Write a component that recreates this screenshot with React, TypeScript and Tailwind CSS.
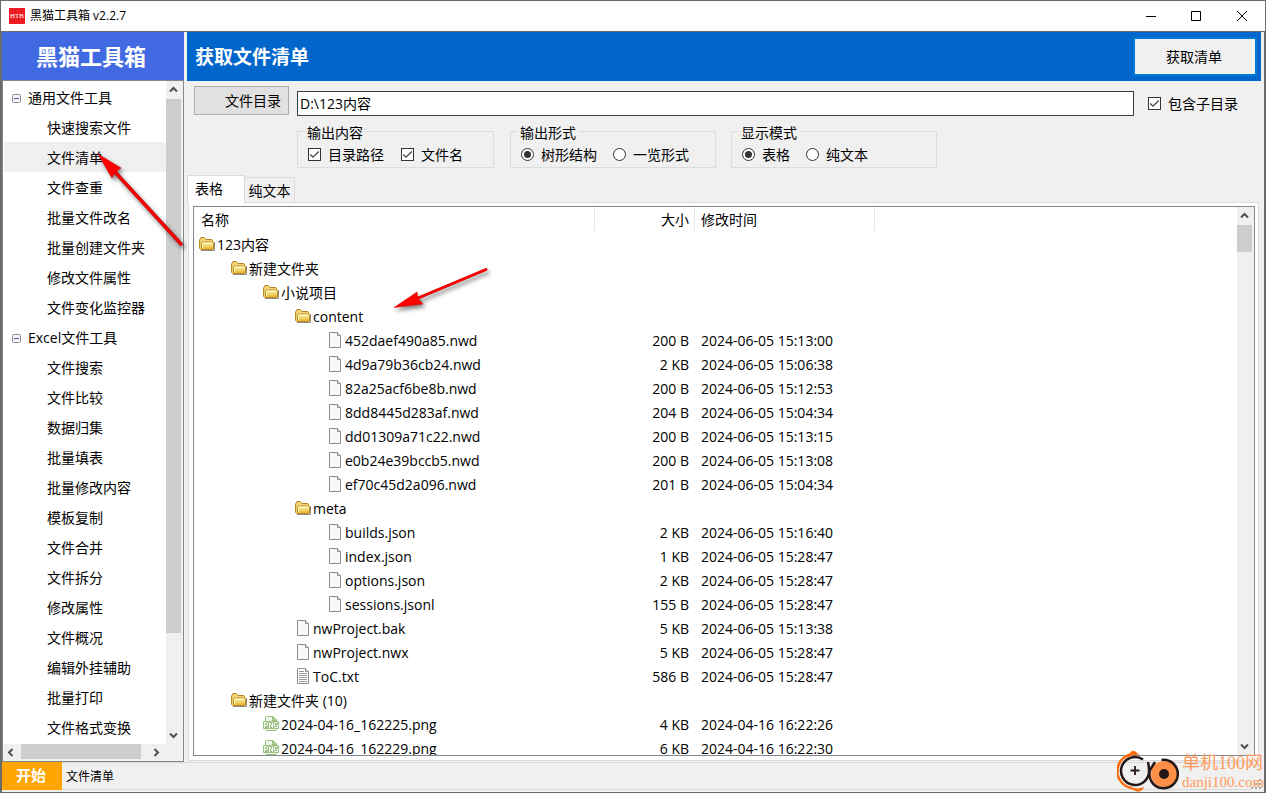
import type { ReactNode } from "react";

type Kind = "folder" | "file" | "text" | "png";
type Row = { level: number; kind: Kind; name: string; size?: string; time?: string };

const groups: { title: string; items: string[] }[] = [
  {
    title: "通用文件工具",
    items: ["快速搜索文件", "文件清单", "文件查重", "批量文件改名", "批量创建文件夹", "修改文件属性", "文件变化监控器"],
  },
  {
    title: "Excel文件工具",
    items: [
      "文件搜索", "文件比较", "数据归集", "批量填表", "批量修改内容", "模板复制", "文件合并",
      "文件拆分", "修改属性", "文件概况", "编辑外挂辅助", "批量打印", "文件格式变换",
    ],
  },
];

const rows: Row[] = [
  { level: 0, kind: "folder", name: "123内容" },
  { level: 1, kind: "folder", name: "新建文件夹" },
  { level: 2, kind: "folder", name: "小说项目" },
  { level: 3, kind: "folder", name: "content" },
  { level: 4, kind: "file", name: "452daef490a85.nwd", size: "200 B", time: "2024-06-05 15:13:00" },
  { level: 4, kind: "file", name: "4d9a79b36cb24.nwd", size: "2 KB", time: "2024-06-05 15:06:38" },
  { level: 4, kind: "file", name: "82a25acf6be8b.nwd", size: "200 B", time: "2024-06-05 15:12:53" },
  { level: 4, kind: "file", name: "8dd8445d283af.nwd", size: "204 B", time: "2024-06-05 15:04:34" },
  { level: 4, kind: "file", name: "dd01309a71c22.nwd", size: "200 B", time: "2024-06-05 15:13:15" },
  { level: 4, kind: "file", name: "e0b24e39bccb5.nwd", size: "200 B", time: "2024-06-05 15:13:08" },
  { level: 4, kind: "file", name: "ef70c45d2a096.nwd", size: "201 B", time: "2024-06-05 15:04:34" },
  { level: 3, kind: "folder", name: "meta" },
  { level: 4, kind: "file", name: "builds.json", size: "2 KB", time: "2024-06-05 15:16:40" },
  { level: 4, kind: "file", name: "index.json", size: "1 KB", time: "2024-06-05 15:28:47" },
  { level: 4, kind: "file", name: "options.json", size: "2 KB", time: "2024-06-05 15:28:47" },
  { level: 4, kind: "file", name: "sessions.jsonl", size: "155 B", time: "2024-06-05 15:28:47" },
  { level: 3, kind: "file", name: "nwProject.bak", size: "5 KB", time: "2024-06-05 15:13:38" },
  { level: 3, kind: "file", name: "nwProject.nwx", size: "5 KB", time: "2024-06-05 15:28:47" },
  { level: 3, kind: "text", name: "ToC.txt", size: "586 B", time: "2024-06-05 15:28:47" },
  { level: 1, kind: "folder", name: "新建文件夹 (10)" },
  { level: 2, kind: "png", name: "2024-04-16_162225.png", size: "4 KB", time: "2024-04-16 16:22:26" },
  { level: 2, kind: "png", name: "2024-04-16_162229.png", size: "6 KB", time: "2024-04-16 16:22:30" },
];

function FileIcon({ kind }: { kind: Kind }) {
  if (kind === "folder") {
    return (
      <svg viewBox="0 0 16 16" className="mb-0.5 size-4 shrink-0" aria-hidden="true">
        <defs>
          <linearGradient id="folderFront" x1="0" y1="0" x2="0" y2="1">
            <stop offset="0" stopColor="#fdf3a8" />
            <stop offset="0.5" stopColor="#f7d86a" />
            <stop offset="1" stopColor="#e3aa2c" />
          </linearGradient>
        </defs>
        <path d="M2 14.500h13.500V6" fill="none" stroke="#8f8a7a" />
        <path d="M.5 12.500V4l1.500-2.500h3.500l1.500 2h6l.5.5v9l-.5.5H1.500z" fill="#f3d475" stroke="#bd8c25" />
        <path d="M2.500 13.500V6.500l.5-.5h11l.5.5v6.500l-.5.5z" fill="url(#folderFront)" stroke="#bd8c25" />
        <path d="M3.500 12.500V7h10" fill="none" stroke="#fffbd2" />
      </svg>
    );
  }
  if (kind === "png") {
    return (
      <svg viewBox="0 0 16 16" className="mb-0.5 size-4 shrink-0" aria-hidden="true">
        <path d="M2.500 5V1.500q0-1 1-1H10l3.500 3.500v1M2.500 12v1.500q0 1 1 1h9q1 0 1-1V12" fill="#f2f8ec" stroke="#94bc7a" />
        <path d="M9.500.500v4h4z" fill="#b4d39e" stroke="#94bc7a" />
        <rect y="5" width="16" height="8" rx="1" fill="#9cc284" />
        <path
          d="M1.500 12V6.500h2q1 0 1 1.500t-1 1.500h-2M6.500 12V6.500l3 5V6.500M14.500 6.500h-2q-1 0-1 1v3q0 1 1 1h2v-2.500h-1"
          fill="none"
          stroke="#fff"
        />
      </svg>
    );
  }
  return (
    <svg viewBox="0 0 16 16" className="mb-0.5 size-4 shrink-0" aria-hidden="true">
      <path d="M2.500.500h8l3 3v12h-11z" fill={kind === "text" ? "#fff" : "#f7f8fa"} stroke="#8e8e8e" />
      <path d="M10.500.500v3h3" fill="#e6e6e6" stroke="#8e8e8e" />
      {kind === "text" && <path d="M4 3.500h5M4 5.500h8M4 7.500h8M4 9.500h8M4 11.500h8M4 13.500h8" stroke="#9a9a9a" />}
    </svg>
  );
}

function Chevron({ turn = "" }: { turn?: string }) {
  return (
    <span className="grid size-[17px] shrink-0 place-items-center pr-0.5">
      <svg viewBox="0 0 9 9" className={`size-[9px] ${turn}`} aria-hidden="true">
        <path d="M1 6.500l3.500-3.500L8 6.500" fill="none" stroke="#505050" strokeWidth="2" />
      </svg>
    </span>
  );
}

function Choice({ type, name, checked, children }: { type: "checkbox" | "radio"; name?: string; checked?: boolean; children: ReactNode }) {
  return (
    <label className="flex items-center gap-[7px] whitespace-nowrap">
      <span className="grid place-items-center">
        <input
          type={type}
          name={name}
          defaultChecked={checked}
          className={`peer col-start-1 row-start-1 size-[13px] appearance-none border border-[#333] bg-white ${type === "radio" ? "rounded-full" : ""}`}
        />
        {type === "radio" ? (
          <span className="pointer-events-none invisible col-start-1 row-start-1 size-[7px] rounded-full bg-[#333] peer-checked:visible" />
        ) : (
          <svg viewBox="0 0 13 13" className="pointer-events-none invisible col-start-1 row-start-1 size-[13px] peer-checked:visible" aria-hidden="true">
            <path d="M2.300 6.500l2.700 2.700L10.800 3.500" fill="none" stroke="#444" strokeWidth="1.300" />
          </svg>
        )}
      </span>
      <span className="pt-0.5 leading-4">{children}</span>
    </label>
  );
}

function Group({ title, width, gap = "gap-4", children }: { title: string; width: string; gap?: string; children: ReactNode }) {
  return (
    <fieldset className={`border border-[#dcdcdc] ${width}`}>
      <legend className="ml-1.5 px-[3px] pt-1 leading-4">{title}</legend>
      <div className={`flex h-[26px] items-center pl-2.5 ${gap}`}>{children}</div>
    </fieldset>
  );
}

function TitleBar() {
  return (
    <header className="flex h-[31px] shrink-0 items-center border-b border-[#6b6b6b] bg-white pl-2">
      <span className="grid size-4 place-items-center bg-[#ed1c24] font-['Liberation_Serif',serif] text-[7px] leading-none text-white">HTB</span>
      <h1 className="ml-[5px] flex-1 text-xs">黑猫工具箱 v2.2.7</h1>
      <button aria-label="最小化" className="grid h-full w-[45px] place-items-center">
        <svg viewBox="0 0 10 10" className="size-2.5"><path d="M0 5.500h10" stroke="#000" /></svg>
      </button>
      <button aria-label="最大化" className="grid h-full w-[46px] place-items-center">
        <svg viewBox="0 0 10 10" className="size-2.5"><path d="M.5.500h9v9h-9z" fill="none" stroke="#000" /></svg>
      </button>
      <button aria-label="关闭" className="grid h-full w-[46px] place-items-center">
        <svg viewBox="0 0 10 10" className="size-2.5"><path d="M0 0l10 10M10 0L0 10" stroke="#000" /></svg>
      </button>
    </header>
  );
}

function Sidebar() {
  return (
    <nav className="flex w-[182px] shrink-0 flex-col">
      <h2 className="flex h-12 shrink-0 items-center justify-center bg-[#4169e1] pt-0.5 pr-1 text-[22px] font-bold text-white">黑猫工具箱</h2>
      <div className="flex min-h-0 flex-1 flex-col border border-[#828790] bg-white">
        <div className="flex min-h-0 flex-1">
          <div className="min-w-0 flex-1 overflow-hidden pt-px pl-px">
            {groups.map((group) => (
              <section key={group.title}>
                <button className="flex h-[30px] w-full items-center gap-[7px] pt-0.5 pl-2 text-left">
                  <svg viewBox="0 0 9 9" className="size-[9px]" aria-hidden="true">
                    <rect x=".5" y=".5" width="8" height="8" rx="1" fill="#f4f4f4" stroke="#919191" />
                    <path d="M2 4.500h5" stroke="#3c5fb4" />
                  </svg>
                  {group.title}
                </button>
                <ul>
                  {group.items.map((item) => (
                    <li key={item}>
                      <button className={`flex h-[30px] w-full items-center pt-0.5 pl-[43px] text-left whitespace-nowrap ${item === "文件清单" ? "bg-[#f0f0f0]" : ""}`}>
                        {item}
                      </button>
                    </li>
                  ))}
                </ul>
              </section>
            ))}
          </div>
          <div className="flex w-[17px] shrink-0 flex-col bg-[#f0f0f0]">
            <Chevron />
            <div className="min-h-0 flex-1 pt-px"><div className="h-[85%] w-[15px] bg-[#cdcdcd]" /></div>
            <Chevron turn="rotate-180" />
          </div>
        </div>
        <div className="flex h-[17px] shrink-0 bg-[#f0f0f0] pr-[17px]">
          <Chevron turn="-rotate-90" />
          <div className="min-w-0 flex-1 pl-px"><div className="h-[15px] w-[94%] bg-[#cdcdcd]" /></div>
          <Chevron turn="rotate-90" />
        </div>
      </div>
    </nav>
  );
}

function FileTable() {
  return (
    <div className="flex min-h-0 flex-1 border border-[#828790] bg-white">
      <div className="min-w-0 flex-1 overflow-hidden">
        <table className="w-full table-fixed border-collapse text-left">
          <colgroup>
            <col className="w-[401px]" />
            <col className="w-[100px]" />
            <col className="w-[180px]" />
            <col />
          </colgroup>
          <thead>
            <tr className="h-[26px]">
              <th className="p-0 pb-0.5 font-normal"><div className="h-6 border-r border-[#e5e5e5] pt-[3px] pl-[7px] leading-5">名称</div></th>
              <th className="p-0 pb-0.5 text-right font-normal"><div className="h-6 border-r border-[#e5e5e5] pt-[3px] pr-[5px] leading-5">大小</div></th>
              <th className="p-0 pb-0.5 font-normal"><div className="h-6 border-r border-[#e5e5e5] pt-[3px] pl-1.5 leading-5">修改时间</div></th>
              <th className="p-0" />
            </tr>
          </thead>
          <tbody>
            {rows.map((row) => (
              <tr key={row.name + row.level} className="h-6">
                <td className="p-0">
                  <div className="flex h-6 items-center gap-0.5 whitespace-nowrap" style={{ paddingLeft: 5 + row.level * 32 }}>
                    <FileIcon kind={row.kind} />
                    {row.name}
                  </div>
                </td>
                <td className="p-0 pr-1.5 text-right">{row.size}</td>
                <td className="p-0 pl-1.5">{row.time}</td>
                <td className="p-0" />
              </tr>
            ))}
          </tbody>
        </table>
      </div>
      <div className="flex w-[17px] shrink-0 flex-col bg-[#f0f0f0]">
        <Chevron />
        <div className="min-h-0 flex-1 pt-px"><div className="h-[27px] w-[15px] bg-[#cdcdcd]" /></div>
        <Chevron turn="rotate-180" />
      </div>
    </div>
  );
}

function Workspace() {
  return (
    <main className="mr-[3px] mb-px ml-[3px] flex min-w-0 flex-1 flex-col">
      <div className="flex h-[49px] shrink-0 items-center justify-between bg-[#0066cc] pr-1 pl-2">
        <h2 className="pt-0.5 text-[19px] font-bold text-white">获取文件清单</h2>
        <button className="h-[39px] w-[124px] border-2 border-[#0078d7] bg-[#f0f0f0] pr-0.5">获取清单</button>
      </div>
      <div className="mt-[5px] flex shrink-0 items-start gap-2 pr-[23px] pl-[7px]">
        <button className="h-[29px] w-[95px] border border-[#adadad] bg-[#e1e1e1] pr-[7px] text-right">文件目录</button>
        <input aria-label="文件目录" defaultValue="D:\123内容" className="mt-[5px] h-[25px] min-w-0 flex-1 border border-[#3c3c3c] bg-white px-0.5 pb-0.5" />
        <div className="mt-2 ml-1.5"><Choice type="checkbox" checked>包含子目录</Choice></div>
      </div>
      <div className="mt-[5px] flex shrink-0 pl-[110px]">
        <Group title="输出内容" width="mr-4 w-[197px]" gap="gap-[17px]">
          <Choice type="checkbox" checked>目录路径</Choice>
          <Choice type="checkbox" checked>文件名</Choice>
        </Group>
        <Group title="输出形式" width="mr-[15px] w-[206px]">
          <Choice type="radio" name="form" checked>树形结构</Choice>
          <Choice type="radio" name="form">一览形式</Choice>
        </Group>
        <Group title="显示模式" width="w-[206px]">
          <Choice type="radio" name="mode" checked>表格</Choice>
          <Choice type="radio" name="mode">纯文本</Choice>
        </Group>
      </div>
      <div role="tablist" className="z-10 mt-[7px] -mb-px flex h-7 shrink-0 items-start">
        <button role="tab" aria-selected="true" className="h-7 w-[58px] border border-b-0 border-[#dcdcdc] bg-white pr-3.5 pb-0.5 text-center">表格</button>
        <button role="tab" aria-selected="false" className="mt-0.5 h-[26px] w-[50px] border border-l-0 border-[#dcdcdc] pt-0.5 text-center whitespace-nowrap">纯文本</button>
      </div>
      <div role="tabpanel" className="mr-0.5 ml-px flex min-h-0 flex-1 flex-col border border-[#dcdcdc] bg-white pt-[3px] pr-[3px] pb-1 pl-1">
        <FileTable />
      </div>
    </main>
  );
}

function Arrows() {
  return (
    <>
      <svg viewBox="0 0 96 104" className="pointer-events-none absolute top-[147px] left-[94px] h-[104px] w-24 drop-shadow-[2px_3px_2px_rgba(0,0,0,0.5)]" aria-hidden="true">
        <path d="M20 24L86 96" stroke="#c00000" strokeWidth="3.500" strokeLinecap="round" />
        <path d="M20 24L86 96" stroke="#ff0000" strokeWidth="2.500" strokeLinecap="round" />
        <path d="M3 6L26 20L20 24L17 30z" fill="#ff0000" stroke="#d00000" strokeWidth=".5" />
      </svg>
      <svg viewBox="0 0 104 52" className="pointer-events-none absolute top-[261px] left-[389px] h-[52px] w-[104px] drop-shadow-[2px_3px_2px_rgba(0,0,0,0.5)]" aria-hidden="true">
        <path d="M27 36.500L96 7.500" stroke="#c00000" strokeWidth="2.800" strokeLinecap="round" />
        <path d="M27 36.500L96 7.500" stroke="#ff0000" strokeWidth="2" strokeLinecap="round" />
        <path d="M4 45.500L27 30L28 36.500L33 42z" fill="#ff0000" stroke="#d00000" strokeWidth=".5" />
      </svg>
    </>
  );
}

function Watermark() {
  return (
    <div className="pointer-events-none absolute right-0 bottom-0 flex h-[42px] w-[148px] items-start gap-px">
      <svg viewBox="0 0 64 42" className="h-[42px] w-16 shrink-0" aria-hidden="true">
        <path d="M10 5Q12 3.500 13 3Q16-1.500 20 3L23 5Q16 3.500 10 8z" fill="#ff6a0a" />
        <path d="M13 36.500Q20 40 27 37Q25 42 20 41.500L14 39z" fill="#ff6a0a" />
        <path d="M14 4.500A17 17 0 0 0 15 38" fill="none" stroke="#ff6a0a" strokeWidth="2.500" />
        <path d="M26 9.500A14 14 0 1 0 32 20Q32 16 31 12" fill="none" stroke="#231815" strokeWidth="2.500" />
        <path d="M18 16v9M13.500 20.500h9" stroke="#231815" strokeWidth="1.800" />
        <circle cx="47" cy="24" r="13" fill="#ff8f47" />
        <path d="M44.500 10A14.200 14.200 0 1 1 33 20L38 12" fill="none" stroke="#231815" strokeWidth="2.500" />
        <circle cx="47" cy="24" r="5" fill="#231815" />
      </svg>
      <div className="pt-0.5 whitespace-nowrap text-[#ff9a5c]">
        <div className="font-['Liberation_Serif','Noto_Sans_CJK_SC',sans-serif] text-[18px] leading-[22px]">单机100网</div>
        <div className="font-['Liberation_Serif',serif] text-[15px] leading-4">danji100.com</div>
      </div>
    </div>
  );
}

export default function App() {
  return (
    <div className="relative flex h-screen flex-col overflow-hidden border border-[#6b6b6b] bg-[#f0f0f0] font-['Open_Sans','Noto_Sans_CJK_SC',sans-serif] text-sm text-black">
      <TitleBar />
      <div className="flex min-h-0 flex-1 border-x border-[#6b6b6b]">
        <Sidebar />
        <Workspace />
      </div>
      <footer className="flex h-[30px] shrink-0 items-start border-x border-[#6b6b6b]">
        <button className="h-7 w-[60px] bg-[#ffa500] pr-0.5 text-[15px] font-bold text-white">开始</button>
        <div className="flex h-7 flex-1 items-center border-t border-b border-[#d9d9d9] pt-0.5 pl-1 text-xs">文件清单</div>
        <svg viewBox="0 0 12 12" className="mt-4 mr-px size-3" aria-hidden="true">
          <path d="M8 1h2v2H8zM4 5h2v2H4zM8 5h2v2H8zM0 9h2v2H0zM4 9h2v2H4zM8 9h2v2H8z" fill="#a8a8a8" />
        </svg>
      </footer>
      <Arrows />
      <Watermark />
    </div>
  );
}
